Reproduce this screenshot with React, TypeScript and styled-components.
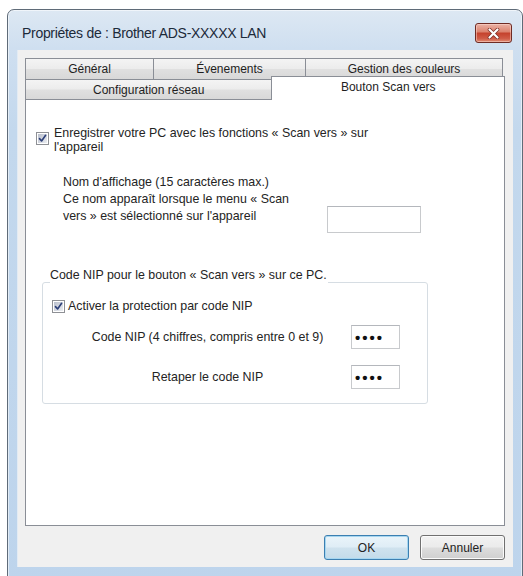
import React from "react";
import styled, { createGlobalStyle } from "styled-components";

const GlobalStyle = createGlobalStyle`
  html, body { margin: 0; padding: 0; background: #ffffff; overflow: hidden; }
  body { font-family: "Liberation Sans", Arial, sans-serif; }
  * { box-sizing: border-box; }
`;

const Page = styled.div`
  width: 523px;
  height: 576px;
  padding: 9px 0 0 7px;
  overflow: hidden;
`;

const Window = styled.div`
  width: 516px;
  height: 590px;
  border: 1px solid #5f6b78;
  border-radius: 7px 7px 0 0;
  background: linear-gradient(180deg, #dde8f3 0px, #cfdff0 38px, #c3d8ed 120px, #bdd4ec 100%);
  box-shadow: inset 0 0 0 1px rgba(255, 255, 255, 0.55);
  padding: 0 9px 9px 9px;
  display: flex;
  flex-direction: column;
`;

const TitleBar = styled.div`
  height: 40px;
  display: flex;
  align-items: flex-start;
  justify-content: space-between;
`;

const Title = styled.div`
  margin: 15px 0 0 5px;
  font-size: 14px;
  line-height: 16px;
  color: #1c2a3a;
  letter-spacing: -0.3px;
`;

const CloseButton = styled.div`
  margin: 13px 1px 0 0;
  width: 37px;
  height: 20px;
  border: 1px solid #6e2b24;
  border-radius: 3px;
  background: linear-gradient(180deg, #eab2a6 0%, #dc8470 42%, #c5432e 52%, #cf5b46 80%, #e08c74 100%);
  box-shadow: inset 0 0 0 1px rgba(255, 220, 210, 0.5);
  display: flex;
  align-items: center;
  justify-content: center;
`;

const Client = styled.div`
  background: #f0f0f0;
  border-left: 1px solid #e2ebf4;
  padding: 8px 8px 7px 7px;
  display: flex;
  flex-direction: column;
`;

const TabRow = styled.div`
  display: flex;
  align-items: flex-end;
`;

const Tab = styled.div<{ $w: number; $active?: boolean }>`
  width: ${(p) => p.$w}px;
  height: ${(p) => (p.$active ? 24 : 21)}px;
  margin-left: -1px;
  &:first-child { margin-left: 0; }
  border: 1px solid #8a8e96;
  border-bottom: none;
  background: ${(p) =>
    p.$active
      ? "#ffffff"
      : "linear-gradient(180deg, #f4f4f4 0%, #ececec 48%, #e0e0e0 52%, #d8d8d8 100%)"};
  ${(p) => (p.$active ? "margin-top: -3px; margin-bottom: -1px; z-index: 1; padding-bottom: 3px;" : "")}
  display: flex;
  align-items: center;
  justify-content: center;
  font-size: 12px;
  color: #1e1e1e;
  white-space: nowrap;
`;

const LowerTab = styled(Tab)`
  height: ${(p) => (p.$active ? 24 : 20)}px;
`;

const Panel = styled.div`
  height: 427px;
  background: #ffffff;
  border: 1px solid #8a8e96;
  padding: 26px 10px 0 10px;
  display: flex;
  flex-direction: column;
  color: #242424;
  font-size: 12.4px;
`;

const CheckRow = styled.div<{ $gap: number; $align: string }>`
  display: flex;
  align-items: ${(p) => p.$align};
  gap: ${(p) => p.$gap}px;
  line-height: 14px;
`;

const CheckBox = styled.span<{ $top: number; $left: number }>`
  flex: none;
  width: 13px;
  height: 13px;
  margin-top: ${(p) => p.$top}px;
  margin-left: ${(p) => p.$left}px;
  border: 1px solid #8e9095;
  background: #ffffff;
  padding: 1px;
  display: flex;
`;

const CheckInner = styled.span`
  flex: 1;
  background: linear-gradient(135deg, #b9bfcc 0%, #d6dae2 60%, #eceef2 100%);
  display: flex;
  align-items: center;
  justify-content: center;
`;

const NameRow = styled.div`
  display: flex;
  align-items: flex-start;
  margin: 20px 0 0 27px;
`;

const Description = styled.div`
  width: 264px;
  line-height: 17px;
`;

const TextField = styled.div<{ $w: number; $h: number; $top?: number }>`
  flex: none;
  width: ${(p) => p.$w}px;
  height: ${(p) => p.$h}px;
  margin-top: ${(p) => p.$top ?? 0}px;
  border: 1px solid #c8cacd;
  border-top-color: #b4b7bc;
  background: #ffffff;
  display: flex;
  align-items: center;
  padding-left: 3px;
`;

const Dots = styled.span`
  font-size: 15px;
  font-weight: bold;
  letter-spacing: 2px;
  color: #111111;
  line-height: 1;
`;

const Group = styled.fieldset`
  margin: 35px 0 0 6px;
  width: 386px;
  border: 1px solid #d6dde3;
  border-radius: 3px;
  padding: 3px 0 14px 7px;
  box-shadow: inset 1px 1px 0 #ffffff;
`;

const Legend = styled.legend`
  padding: 0 1px 14px 0;
  line-height: 14px;
  font-size: 12.4px;
  color: #242424;
`;

const NipGrid = styled.div`
  display: grid;
  grid-template-columns: 275px 49px;
  column-gap: 6px;
  row-gap: 16px;
  align-items: center;
  margin: 12px 0 0 20px;
`;

const NipLabel = styled.div`
  text-align: center;
  line-height: 14px;
`;

const ButtonRow = styled.div`
  display: flex;
  justify-content: flex-end;
  gap: 11px;
  margin-top: 9px;
`;

const Button = styled.div<{ $default?: boolean }>`
  width: 85px;
  height: 25px;
  border-radius: 3px;
  border: 1px solid ${(p) => (p.$default ? "#3c7fb1" : "#707070")};
  background: ${(p) =>
    p.$default
      ? "linear-gradient(180deg, #eaf4fa 0%, #dfedf6 48%, #cfe2ee 52%, #c3dbea 100%)"
      : "linear-gradient(180deg, #f2f2f2 0%, #ebebeb 48%, #dddddd 52%, #cfcfcf 100%)"};
  box-shadow: inset 0 0 0 1px ${(p) => (p.$default ? "#a6d6f0" : "#fbfbfb")};
  display: flex;
  align-items: center;
  justify-content: center;
  font-size: 12px;
  color: #222222;
`;

const CheckMark = () => (
  <svg width="9" height="9" viewBox="0 0 9 9">
    <path d="M1.5 4.6 L3.6 7 L7.6 1.3" fill="none" stroke="#2c3f78" strokeWidth="1.6" strokeLinecap="round" strokeLinejoin="round" />
  </svg>
);

const CloseX = () => (
  <svg width="13" height="11" viewBox="0 0 13 11">
    <path d="M2.5 1.5 L10.5 9.5 M10.5 1.5 L2.5 9.5" stroke="#7a2a22" strokeWidth="3.6" strokeLinecap="round" />
    <path d="M2.5 1.5 L10.5 9.5 M10.5 1.5 L2.5 9.5" stroke="#ffffff" strokeWidth="2.2" strokeLinecap="round" />
  </svg>
);

const Check = ({ top, left }: { top: number; left: number }) => (
  <CheckBox $top={top} $left={left}>
    <CheckInner>
      <CheckMark />
    </CheckInner>
  </CheckBox>
);

export default function App() {
  return (
    <>
      <GlobalStyle />
      <Page>
        <Window>
          <TitleBar>
            <Title>Propriétes de : Brother ADS-XXXXX LAN</Title>
            <CloseButton>
              <CloseX />
            </CloseButton>
          </TitleBar>
          <Client>
            <TabRow>
              <Tab $w={129}>Général</Tab>
              <Tab $w={153}>Évenements</Tab>
              <Tab $w={198}>Gestion des couleurs</Tab>
            </TabRow>
            <TabRow>
              <LowerTab $w={248}>Configuration réseau</LowerTab>
              <LowerTab $w={234} $active>
                Bouton Scan vers
              </LowerTab>
            </TabRow>
            <Panel>
              <CheckRow $gap={5} $align="flex-start">
                <Check top={6} left={0} />
                <span>
                  Enregistrer votre PC avec les fonctions « Scan vers » sur
                  <br />
                  l'appareil
                </span>
              </CheckRow>
              <NameRow>
                <Description>
                  Nom d'affichage (15 caractères max.)
                  <br />
                  Ce nom apparaît lorsque le menu « Scan
                  <br />
                  vers » est sélectionné sur l'appareil
                </Description>
                <TextField $w={94} $h={27} $top={32} />
              </NameRow>
              <Group>
                <Legend>Code NIP pour le bouton « Scan vers » sur ce PC.</Legend>
                <CheckRow $gap={3} $align="center">
                  <Check top={0} left={2} />
                  <span>Activer la protection par code NIP</span>
                </CheckRow>
                <NipGrid>
                  <NipLabel>Code NIP (4 chiffres, compris entre 0 et 9)</NipLabel>
                  <TextField $w={49} $h={24}>
                    <Dots>••••</Dots>
                  </TextField>
                  <NipLabel>Retaper le code NIP</NipLabel>
                  <TextField $w={49} $h={24}>
                    <Dots>••••</Dots>
                  </TextField>
                </NipGrid>
              </Group>
            </Panel>
            <ButtonRow>
              <Button $default>OK</Button>
              <Button>Annuler</Button>
            </ButtonRow>
          </Client>
        </Window>
      </Page>
    </>
  );
}
